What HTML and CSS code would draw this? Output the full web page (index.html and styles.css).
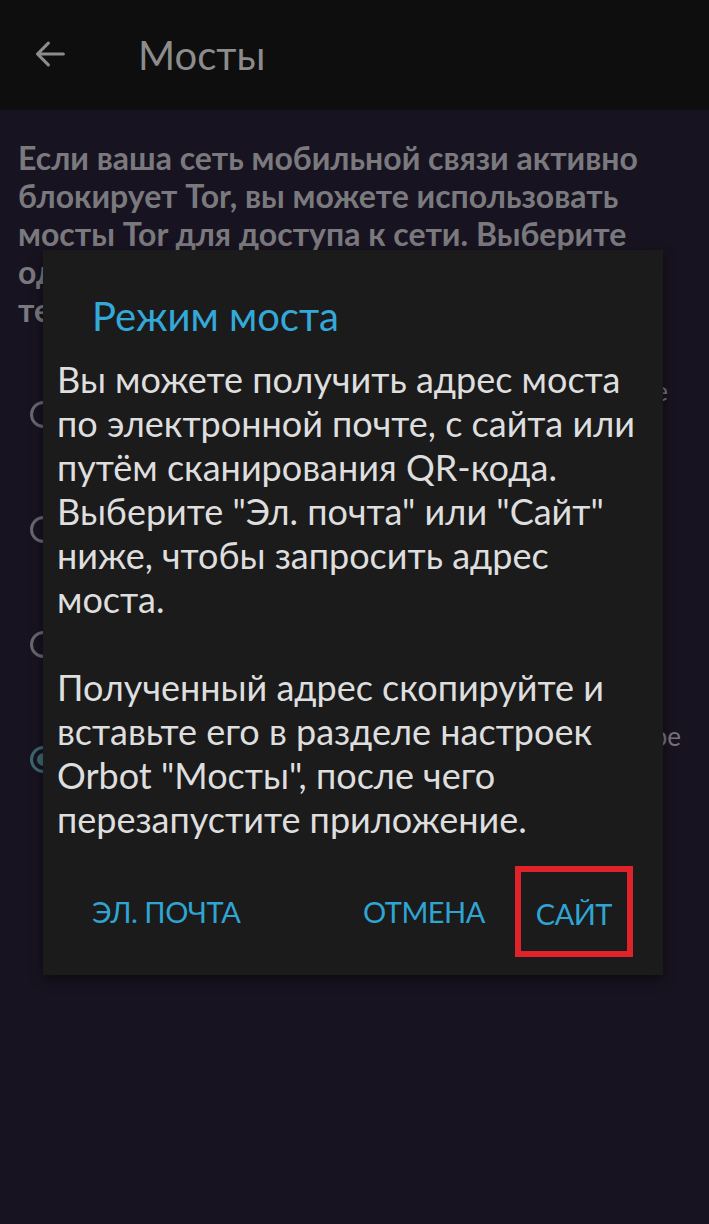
FILE: index.html
```html
<!DOCTYPE html>
<html lang="ru">
<head>
    <meta charset="UTF-8">
    <meta name="viewport" content="width=device-width, initial-scale=1.0">
    <title>Мосты</title>
    <link rel="stylesheet" href="styles.css">
</head>
<body>
    <header class="appbar">
        <svg class="back" width="40" height="40" viewBox="0 0 24 24">
            <path d="M20 12H5M11 5.5L4.5 12L11 18.5" fill="none" stroke="currentColor" stroke-width="1.9" stroke-linecap="round" stroke-linejoin="round"/>
        </svg>
        <h1>Мосты</h1>
    </header>

    <main class="content">
        <p class="intro">
            Если ваша сеть мобильной связи активно<br>
            блокирует Tor, вы можете использовать<br>
            мосты Tor для доступа к сети. Выберите<br>
            один из способов получения мостов,<br>
            текущий режим отмечен ниже.
        </p>

        <ul class="options">
            <li class="option">
                <span class="radio"></span>
                <span class="label">
                    <span class="line wide">Подключаться к Tor напрямую, как прежде</span>
                    <span class="line">без мостов</span>
                </span>
            </li>
            <li class="option">
                <span class="radio"></span>
                <span class="label">Мосты obfs4</span>
            </li>
            <li class="option">
                <span class="radio"></span>
                <span class="label">Мосты meek</span>
            </li>
            <li class="option">
                <span class="radio checked"></span>
                <span class="label">
                    <span class="line wide">Вставить свои мосты, как в примере</span>
                    <span class="line">адреса мостов</span>
                </span>
            </li>
        </ul>
    </main>

    <div class="dialog">
        <h2 class="dialog-title">Режим моста</h2>
        <p class="dialog-text">Вы можете получить адрес моста<br>по электронной почте, с сайта или<br>путём сканирования QR-кода.<br>Выберите "Эл. почта" или "Сайт"<br>ниже, чтобы запросить адрес<br>моста.</p>
        <p class="dialog-text">Полученный адрес скопируйте и<br>вставьте его в разделе настроек<br>Orbot "Мосты", после чего<br>перезапустите приложение.</p>
        <div class="dialog-actions">
            <button class="action">Эл. почта</button>
            <span class="spacer"></span>
            <button class="action">Отмена</button>
            <button class="action selected">Сайт</button>
        </div>
    </div>
</body>
</html>
```

FILE: styles.css
```css
body {
    margin: 0;
    background-color: #181320;
    font-family: Lato, "Open Sans", sans-serif;
    height: 1224px;
    overflow: hidden;
}

.appbar {
    height: 110px;
    background-color: #0e0e0e;
    display: flex;
    align-items: center;
    color: #8c8c8c;
}
.back {
    margin-left: 30px;
    margin-top: -2px;
}
.appbar h1 {
    margin: 0 0 0 68px;
    font-weight: 400;
    font-size: 40px;
}

.content {
    padding: 0 0 0 18px;
}
.intro {
    margin: 29px 0 0;
    color: #7a7a7e;
    font-weight: 700;
    font-size: 32px;
    line-height: 38px;
    white-space: nowrap;
}

.options {
    list-style: none;
    margin: 28px 0 0;
    padding: 0;
}
.option {
    height: 115px;
    display: flex;
    align-items: center;
}
.radio {
    width: 21px;
    height: 21px;
    border: 3px solid #6a676e;
    border-radius: 50%;
    margin-left: 12px;
    flex-shrink: 0;
    position: relative;
}
.radio.checked {
    border-color: #3d6870;
}
.radio.checked::after {
    content: "";
    position: absolute;
    left: 4px;
    top: 4px;
    width: 13px;
    height: 13px;
    border-radius: 50%;
    background-color: #3d6870;
}
.label {
    flex: 1;
    margin: 0 30px 0 30px;
    color: #77747c;
    font-size: 26px;
    line-height: 32px;
}
.line {
    display: block;
    white-space: nowrap;
}
.line.wide {
    text-align: right;
}
.option:first-child .label {
    margin-right: 41px;
    margin-top: -16px;
}
.option:last-child .label {
    margin-right: 28px;
    margin-top: -16px;
}

.dialog {
    position: absolute;
    left: 43px;
    top: 250px;
    width: 620px;
    height: 725px;
    box-sizing: border-box;
    background-color: #1b1b1b;
    box-shadow: 0 4px 12px rgba(0, 0, 0, 0.45);
    padding: 44px 0 0 14px;
}
.dialog-title {
    margin: 0 0 19px 35px;
    color: #34a9d9;
    font-weight: 400;
    font-size: 40px;
    line-height: 44px;
}
.dialog-text {
    margin: 0 0 44px;
    color: #dedede;
    font-size: 36px;
    line-height: 44px;
    white-space: nowrap;
}
.dialog-text:last-of-type {
    margin-bottom: 0;
}

.dialog-actions {
    display: flex;
    align-items: center;
    margin-top: 31px;
    padding-left: 35px;
}
.spacer {
    flex: 1;
}
.action {
    background: none;
    border: none;
    padding: 0;
    font-family: inherit;
    font-size: 29px;
    line-height: 35px;
    text-transform: uppercase;
    color: #2fa5d4;
    letter-spacing: -0.5px;
}
.action.selected {
    outline: 6px solid #e0222a;
    padding: 24px 15px 20px;
    margin-left: 36px;
    margin-right: 36px;
}
```
